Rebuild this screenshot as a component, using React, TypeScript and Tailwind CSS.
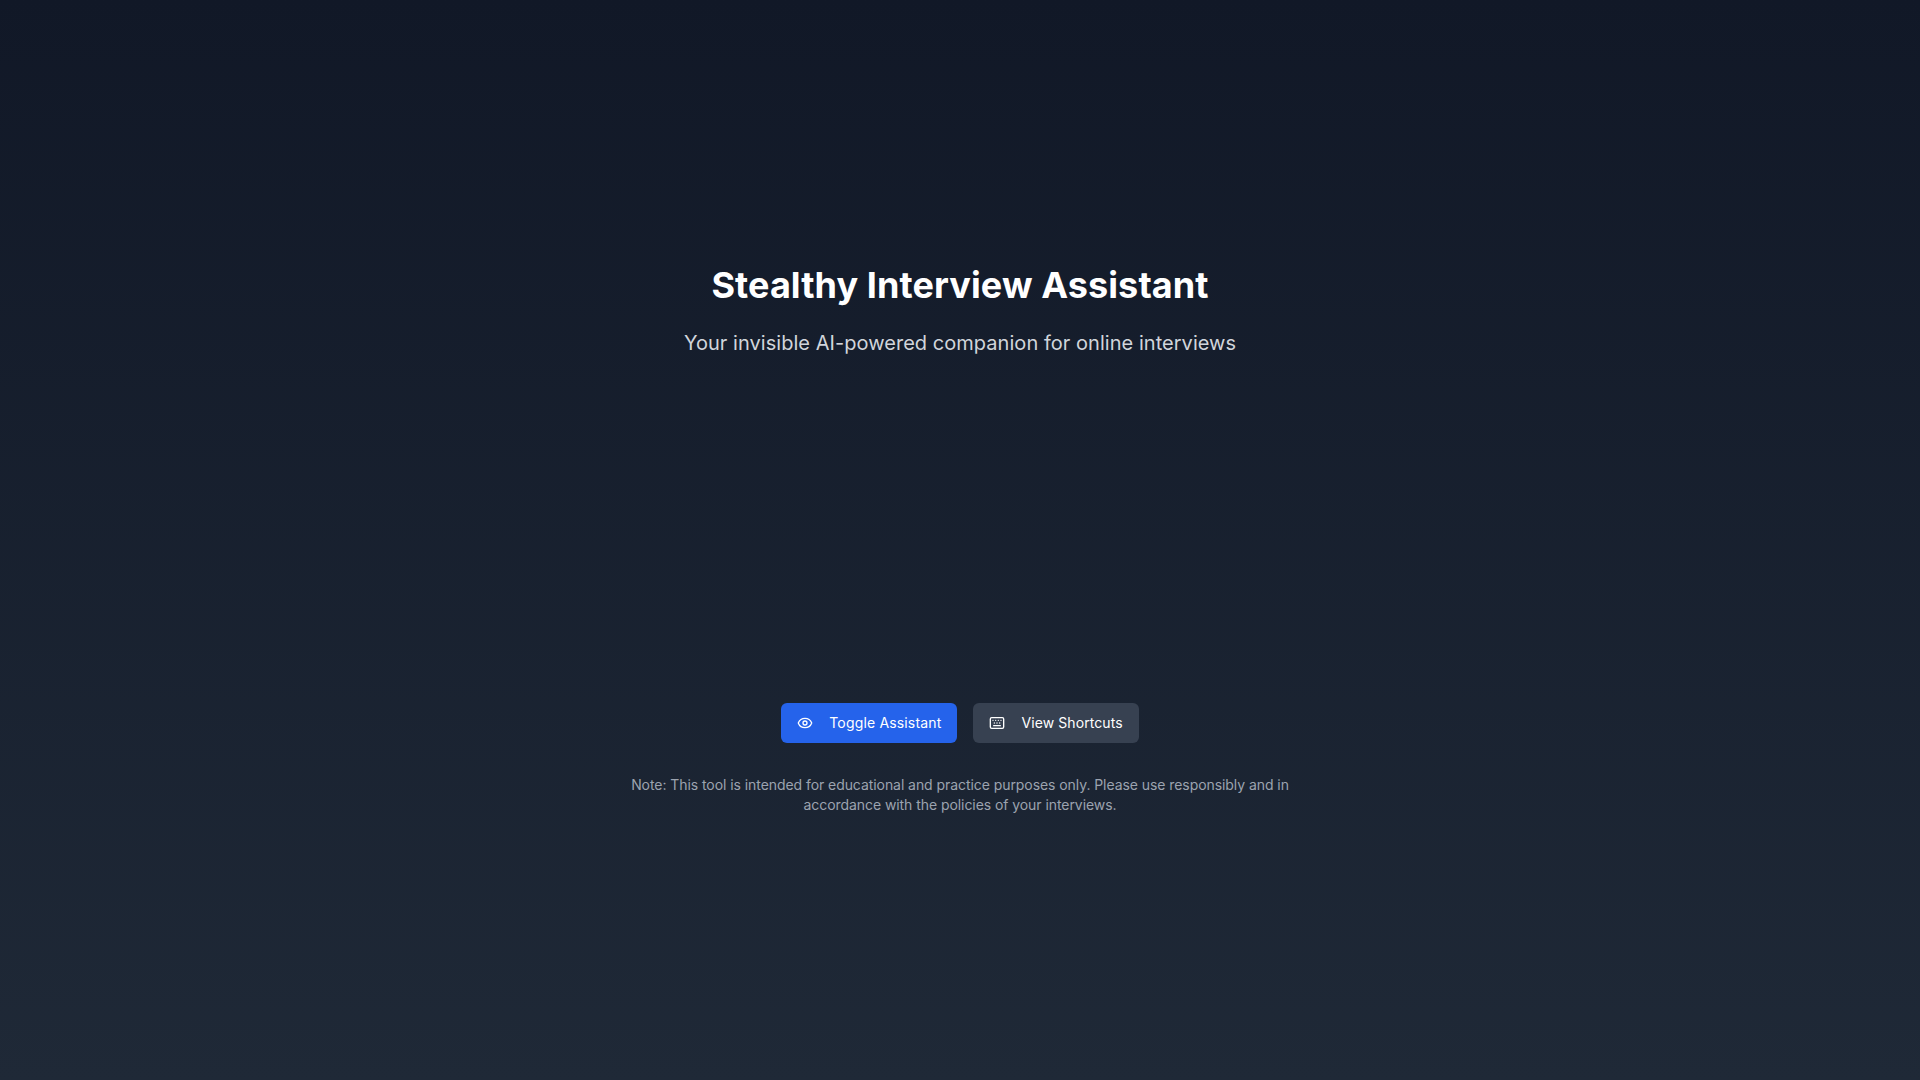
import { Eye, Keyboard } from 'lucide-react'

export default function App() {
  return (
    <div className="min-h-screen flex flex-col items-center justify-center bg-gradient-to-b from-[#111827] to-[#1f2937] text-white font-['Inter',sans-serif]">
      <h1 className="text-4xl font-bold tracking-[0.09px] mb-6">Stealthy Interview Assistant</h1>
      <p className="text-xl tracking-[0.04px] text-[#d1d5db]">Your invisible AI-powered companion for online interviews</p>

      {/* empty area, the assistant panel is hidden */}
      <div className="h-[346px]" />

      <div className="flex gap-4">
        <button className="flex items-center gap-4 h-10 px-4 rounded-md bg-[#2563eb] text-sm tracking-[0.16px]">
          <Eye className="w-4 h-4" />
          Toggle Assistant
        </button>
        <button className="flex items-center gap-4 h-10 px-4 rounded-md bg-[#374151] text-sm tracking-[0.09px]">
          <Keyboard className="w-4 h-4" />
          View Shortcuts
        </button>
      </div>

      <p className="mt-8 max-w-2xl text-sm tracking-[-0.065px] text-[#9ca3af] text-center">
        Note: This tool is intended for educational and practice purposes only. Please use responsibly and in accordance with the policies of your interviews.
      </p>
    </div>
  )
}
